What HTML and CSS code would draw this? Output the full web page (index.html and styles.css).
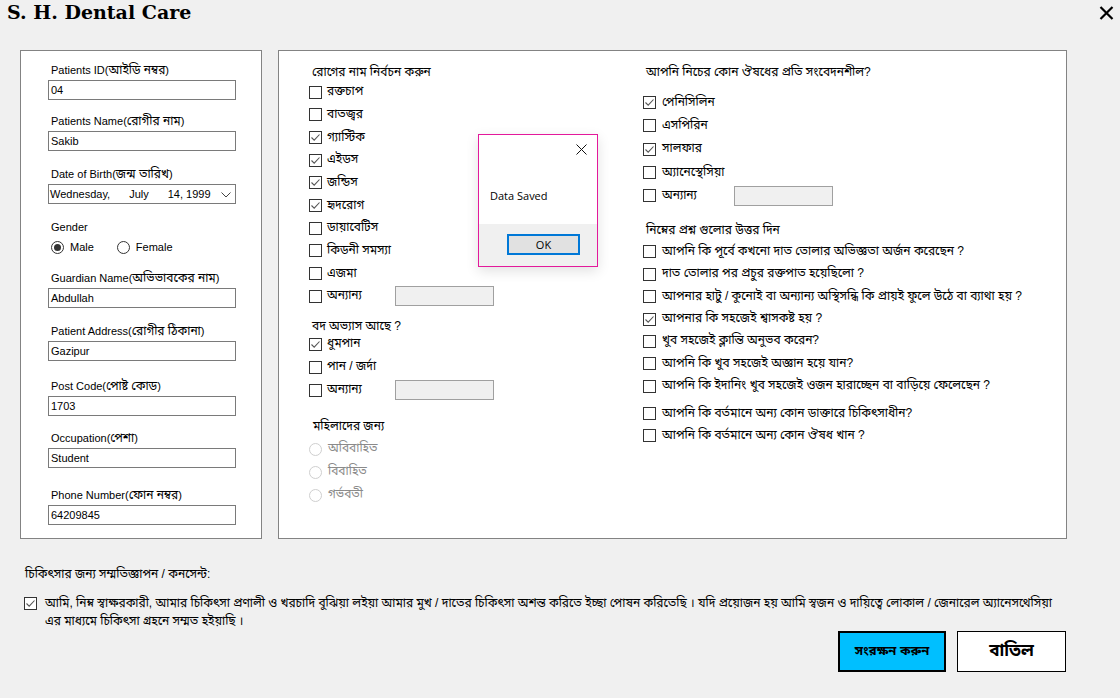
FILE: index.html
```html
<!DOCTYPE html>
<html lang="bn">
<head>
<meta charset="utf-8">
<title>S. H. Dental Care</title>
<link rel="stylesheet" href="styles.css">
</head>
<body>
<div class="window">
  <header class="titlebar">
    <h1 class="title">S. H. Dental Care</h1>
    <svg class="close" width="15" height="14" viewBox="0 0 15 14"><path d="M1.5 1 L13.5 13 M13.5 1 L1.5 13" stroke="#000" stroke-width="2.2" fill="none"/></svg>
  </header>

  <div class="content">
    <section class="panel left">
      <div class="field-group">
        <label class="lbl">Patients ID(<span class="bn">আইডি নম্বর</span>)</label>
        <div class="input">04</div>
      </div>
      <div class="field-group mt14">
        <label class="lbl">Patients Name(<span class="bn">রোগীর নাম</span>)</label>
        <div class="input">Sakib</div>
      </div>
      <div class="field-group mt16">
        <label class="lbl">Date of Birth(<span class="bn">জন্ম তারিখ</span>)</label>
        <div class="input date">
          <span class="d1">Wednesday,</span><span class="d2">July</span><span class="d3">14, 1999</span>
          <svg class="chev" width="10" height="6" viewBox="0 0 10 6"><path d="M0.5 0.5 L5 5 L9.5 0.5" stroke="#444" stroke-width="1" fill="none"/></svg>
        </div>
      </div>
      <div class="field-group mt16">
        <label class="lbl">Gender</label>
        <div class="radios">
          <span class="radio on"></span><span class="rtext">Male</span>
          <span class="radio female"></span><span class="rtext">Female</span>
        </div>
      </div>
      <div class="field-group mt17">
        <label class="lbl">Guardian Name(<span class="bn">অভিভাবকের নাম</span>)</label>
        <div class="input">Abdullah</div>
      </div>
      <div class="field-group mt16">
        <label class="lbl">Patient Address(<span class="bn">রোগীর ঠিকানা</span>)</label>
        <div class="input">Gazipur</div>
      </div>
      <div class="field-group mt18">
        <label class="lbl">Post Code(<span class="bn">পোষ্ট কোড</span>)</label>
        <div class="input">1703</div>
      </div>
      <div class="field-group mt15">
        <label class="lbl">Occupation(<span class="bn">পেশা</span>)</label>
        <div class="input">Student</div>
      </div>
      <div class="field-group mt20">
        <label class="lbl">Phone Number(<span class="bn">ফোন নম্বর</span>)</label>
        <div class="input">64209845</div>
      </div>
    </section>

    <section class="panel main">
      <div class="col col1">
        <div class="heading h-first">রোগের নাম নির্বচন করুন</div>
        <div class="rows r67">
          <div class="row"><span class="cb"></span><span>রক্তচাপ</span></div>
          <div class="row"><span class="cb"></span><span>বাতজ্বর</span></div>
          <div class="row"><span class="cb on"><svg viewBox="0 0 11 11"><path d="M1.5 5.5 L4.2 8.2 L9.5 2.5"/></svg></span><span>গ্যাস্টিক</span></div>
          <div class="row"><span class="cb on"><svg viewBox="0 0 11 11"><path d="M1.5 5.5 L4.2 8.2 L9.5 2.5"/></svg></span><span>এইডস</span></div>
          <div class="row"><span class="cb on"><svg viewBox="0 0 11 11"><path d="M1.5 5.5 L4.2 8.2 L9.5 2.5"/></svg></span><span>জন্ডিস</span></div>
          <div class="row"><span class="cb on"><svg viewBox="0 0 11 11"><path d="M1.5 5.5 L4.2 8.2 L9.5 2.5"/></svg></span><span>হৃদরোগ</span></div>
          <div class="row"><span class="cb"></span><span>ডায়াবেটিস</span></div>
          <div class="row"><span class="cb"></span><span>কিডনী সমস্যা</span></div>
          <div class="row"><span class="cb"></span><span>এজমা</span></div>
          <div class="row"><span class="cb"></span><span class="other">অন্যান্য</span><span class="dis-input"></span></div>
        </div>
        <div class="heading h-habit">বদ অভ্যাস আছে ?</div>
        <div class="rows r23">
          <div class="row"><span class="cb on"><svg viewBox="0 0 11 11"><path d="M1.5 5.5 L4.2 8.2 L9.5 2.5"/></svg></span><span>ধুমপান</span></div>
          <div class="row"><span class="cb"></span><span>পান / জর্দা</span></div>
          <div class="row"><span class="cb"></span><span class="other">অন্যান্য</span><span class="dis-input"></span></div>
        </div>
        <div class="heading h-women">মহিলাদের জন্য</div>
        <div class="rows r23 women">
          <div class="row disabled"><span class="radio dis"></span><span>অবিবাহিত</span></div>
          <div class="row disabled"><span class="radio dis"></span><span>বিবাহিত</span></div>
          <div class="row disabled"><span class="radio dis"></span><span>গর্ভবতী</span></div>
        </div>
      </div>

      <div class="col col2">
        <div class="heading h-first">আপনি নিচের কোন ঔষধের প্রতি সংবেদনশীল?</div>
        <div class="rows r233 drugs">
          <div class="row"><span class="cb on"><svg viewBox="0 0 11 11"><path d="M1.5 5.5 L4.2 8.2 L9.5 2.5"/></svg></span><span>পেনিসিলিন</span></div>
          <div class="row"><span class="cb"></span><span>এসপিরিন</span></div>
          <div class="row"><span class="cb on"><svg viewBox="0 0 11 11"><path d="M1.5 5.5 L4.2 8.2 L9.5 2.5"/></svg></span><span>সালফার</span></div>
          <div class="row"><span class="cb"></span><span>অ্যানেস্থেসিয়া</span></div>
          <div class="row"><span class="cb"></span><span class="other2">অন্যান্য</span><span class="dis-input"></span></div>
        </div>
        <div class="heading h-q">নিম্নের প্রশ্ন গুলোর উত্তর দিন</div>
        <div class="rows r224 questions">
          <div class="row"><span class="cb"></span><span>আপনি কি পূর্বে কখনো দাত তোলার অভিজ্ঞতা অর্জন করেছেন ?</span></div>
          <div class="row"><span class="cb"></span><span>দাত তোলার পর প্রচুর রক্তপাত হয়েছিলো ?</span></div>
          <div class="row"><span class="cb"></span><span>আপনার হাটু / কুনোই বা অন্যান্য অস্থিসন্ধি কি প্রায়ই ফুলে উঠে বা ব্যাথা হয় ?</span></div>
          <div class="row"><span class="cb on"><svg viewBox="0 0 11 11"><path d="M1.5 5.5 L4.2 8.2 L9.5 2.5"/></svg></span><span>আপনার কি সহজেই শ্বাসকষ্ট হয় ?</span></div>
          <div class="row"><span class="cb"></span><span>খুব সহজেই ক্লান্তি অনুভব করেন?</span></div>
          <div class="row"><span class="cb"></span><span>আপনি কি খুব সহজেই অজ্ঞান হয়ে যান?</span></div>
          <div class="row"><span class="cb"></span><span>আপনি কি ইদানিং খুব সহজেই ওজন হারাচ্ছেন বা বাড়িয়ে ফেলেছেন ?</span></div>
          <div class="row gap-before"><span class="cb"></span><span>আপনি কি বর্তমানে অন্য কোন ডাক্তারে চিকিৎসাধীন?</span></div>
          <div class="row"><span class="cb"></span><span>আপনি কি বর্তমানে অন্য কোন ঔষধ খান ?</span></div>
        </div>
      </div>
    </section>
  </div>

  <section class="consent">
    <div class="consent-title">চিকিৎসার জন্য সম্মতিজ্ঞাপন / কনসেন্ট:</div>
    <div class="consent-row">
      <span class="cb on"><svg viewBox="0 0 11 11"><path d="M1.5 5.5 L4.2 8.2 L9.5 2.5"/></svg></span>
      <p class="consent-text">আমি, নিম্ন স্বাক্ষরকারী, আমার চিকিৎসা প্রণালী ও খরচাদি বুঝিয়া লইয়া আমার মুখ / দাতের চিকিৎসা অশন্ত করিতে ইচ্ছা পোষন করিতেছি । যদি প্রয়োজন হয় আমি স্বজন ও দায়িত্বে লোকাল / জেনারেল অ্যানেসথেসিয়া<br>এর মাধ্যমে চিকিৎসা গ্রহনে সম্মত হইয়াছি ।</p>
    </div>
  </section>

  <div class="actions">
    <button class="btn save">সংরক্ষন করুন</button>
    <button class="btn cancel">বাতিল</button>
  </div>

  <div class="dialog">
    <div class="dialog-body">
      <svg class="dlg-close" width="11" height="11" viewBox="0 0 11 11"><path d="M0.5 0.5 L10.5 10.5 M10.5 0.5 L0.5 10.5" stroke="#111" stroke-width="1" fill="none"/></svg>
      <div class="dlg-msg">Data Saved</div>
    </div>
    <div class="dialog-foot">
      <button class="ok">OK</button>
    </div>
  </div>
</div>
</body>
</html>
```

FILE: styles.css
```css
* { box-sizing: border-box; }
html, body { margin: 0; padding: 0; }
body {
  background: #f0f0f0;
  font-family: "Liberation Sans", "Noto Sans Bengali", "Noto Sans", sans-serif;
  font-size: 11px;
  color: #000;
}
.bn { font-size: 12px; }
.window {
  position: relative;
  width: 1120px;
  height: 698px;
  overflow: hidden;
}
.titlebar {
  height: 50px;
  display: flex;
  justify-content: space-between;
  align-items: flex-start;
  padding: 0 6px 0 7px;
}
.title {
  margin: 0;
  font-family: "DejaVu Serif", "Liberation Serif", serif;
  font-weight: bold;
  font-size: 19px;
  line-height: 24px;
}
.close { margin-top: 6px; }

.content {
  display: flex;
  padding-left: 20px;
  gap: 16px;
  height: 489px;
}
.panel {
  background: #fff;
  border: 1px solid #838383;
  height: 489px;
}
.left {
  width: 242px;
  padding: 12px 0 0 27px;
}
.field-group { width: 188px; }
.mt14 { margin-top: 14px; }
.mt15 { margin-top: 15px; }
.mt16 { margin-top: 16px; }
.mt17 { margin-top: 17px; }
.mt18 { margin-top: 18px; }
.mt20 { margin-top: 20px; }
.lbl {
  display: block;
  line-height: 14px;
  height: 14px;
  margin: 0 0 3px 3px;
  white-space: nowrap;
}
.input {
  height: 20px;
  border: 1px solid #7a7a7a;
  background: #fff;
  line-height: 18px;
  padding-left: 2px;
  white-space: nowrap;
}
.date {
  position: relative;
  display: flex;
  padding-left: 1px;
}
.date .d2 { margin-left: 19px; }
.date .d3 { margin-left: 19px; }
.chev { position: absolute; right: 4px; top: 7px; }

.radios {
  display: flex;
  align-items: center;
  height: 14px;
  margin-top: 6px;
  margin-left: 3px;
}
.radio {
  width: 13px;
  height: 13px;
  border: 1px solid #333;
  border-radius: 50%;
  background: #fff;
  display: inline-flex;
  align-items: center;
  justify-content: center;
  flex: none;
}
.radio.on::after {
  content: "";
  width: 7px;
  height: 7px;
  border-radius: 50%;
  background: #333;
}
.radio.female { margin-left: 23px; }
.rtext { margin-left: 6px; }
.radio.dis { border-color: #cfcfcf; }

.main {
  width: 789px;
  display: flex;
  padding: 14px 0 0 30px;
}
.col1 { width: 334px; }
.col2 { flex: 1; }
.heading {
  font-size: 12px;
  line-height: 14px;
  height: 14px;
  margin-left: 3px;
  white-space: nowrap;
}
.col1 .h-first { height: 16px; }
.row {
  display: flex;
  align-items: center;
  white-space: nowrap;
  font-size: 12px;
}
.r67 .row { height: 22.67px; }
.r23 .row { height: 23px; }
.r233 .row { height: 23.33px; }
.r224 .row { height: 22.4px; }
.cb {
  width: 13px;
  height: 13px;
  border: 1px solid #333;
  background: #fff;
  margin-right: 5px;
  flex: none;
  display: inline-flex;
  align-items: center;
  justify-content: center;
}
.col2 .cb { margin-right: 6px; }
.cb svg { width: 11px; height: 11px; }
.cb svg path { stroke: #555; stroke-width: 1.1; fill: none; }
.other { width: 68px; }
.other2 { width: 72px; }
.dis-input {
  width: 99px;
  height: 20px;
  border: 1px solid #a0a0a0;
  background: #f0f0f0;
}
.h-habit { margin-top: 11px; }
.h-women { margin-top: 17px; margin-left: 4px; }
.women { margin-top: 5px; }
.row.disabled { color: #8a8a8a; }
.row.disabled .radio { margin-right: 6px; }
.drugs { margin-top: 12px; }
.h-q { margin-top: 15px; }
.questions { margin-top: 4px; }
.row.gap-before { margin-top: 5px; }

.consent { padding: 28px 0 0 24px; font-size: 12px; }
.consent-title {
  line-height: 14px;
  margin-left: 1px;
}
.consent-row {
  display: flex;
  align-items: flex-start;
  margin-top: 13px;
}
.consent-row .cb { margin-right: 8px; margin-top: 3px; }
.consent-text {
  margin: 0;
  line-height: 18px;
  white-space: nowrap;
}

.actions {
  display: flex;
  gap: 11px;
  padding-left: 838px;
  margin-top: 1px;
}
.btn {
  height: 41px;
  font-family: "Liberation Sans", "Noto Sans Bengali", "Noto Sans", sans-serif;
  font-weight: bold;
  color: #000;
  padding: 0;
}
.save {
  width: 108px;
  background: #00bfff;
  border: 2px solid #000;
  font-size: 13px;
}
.cancel {
  width: 109px;
  background: #fff;
  border: 1px solid #000;
  font-size: 17px;
}

.dialog {
  position: absolute;
  left: 478px;
  top: 134px;
  width: 120px;
  height: 133px;
  border: 1px solid #e3199b;
  background: #fff;
  box-shadow: 0 4px 12px rgba(0,0,0,0.12);
  display: flex;
  flex-direction: column;
}
.dialog-body {
  position: relative;
  height: 89px;
  background: #fff;
}
.dlg-close { position: absolute; left: 97px; top: 9px; }
.dlg-msg {
  position: absolute;
  left: 11px;
  top: 53px;
  font-family: "Open Sans", "Noto Sans", sans-serif;
  font-size: 11px;
}
.dialog-foot {
  flex: 1;
  background: #f0f0f0;
  padding: 10px 0 0 28px;
}
.ok {
  width: 73px;
  height: 21px;
  border: 2px solid #0078d7;
  background: #e1e1e1;
  font-family: "Open Sans", "Noto Sans", sans-serif;
  font-size: 11px;
  padding: 0;
  color: #000;
}
```
